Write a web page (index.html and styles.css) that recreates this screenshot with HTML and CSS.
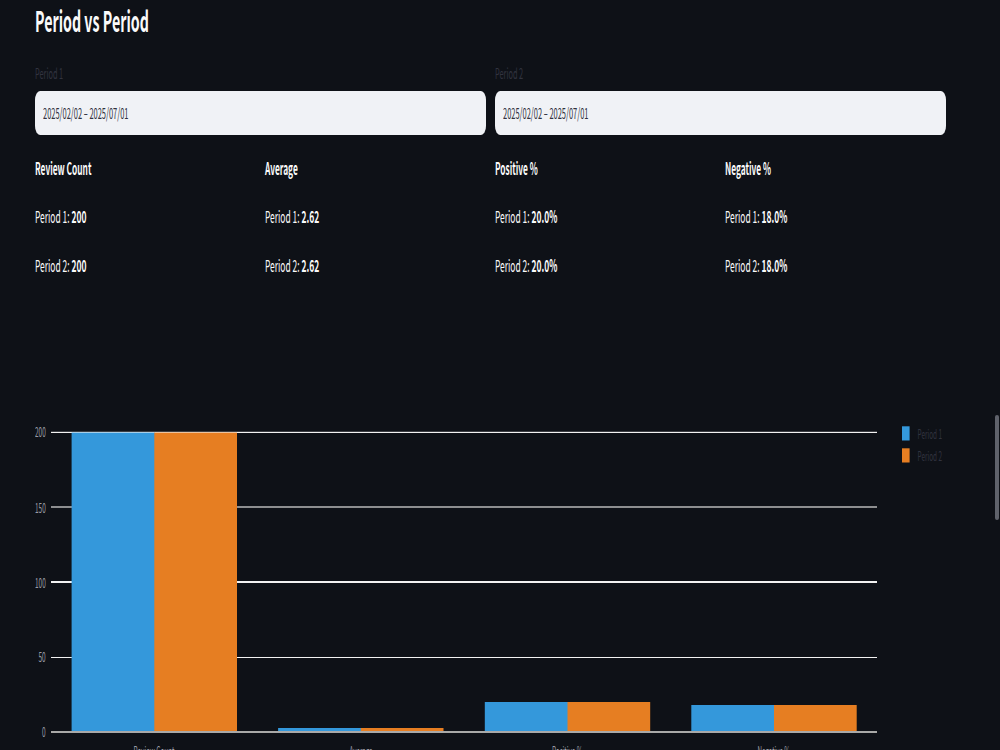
FILE: index.html
```html
<!DOCTYPE html>
<html lang="en">
<head>
    <meta charset="UTF-8">
    <meta name="viewport" content="width=device-width, initial-scale=1.0">
    <title>Period vs Period</title>
    <link rel="stylesheet" href="styles.css">
</head>
<body>
    <main class="container">
        <h3 class="title"><span class="narrow">Period vs Period</span></h3>

        <div class="inputs">
            <div class="field">
                <div class="label"><span class="narrow">Period 1</span></div>
                <div class="date-input"><span class="narrow">2025/02/02 – 2025/07/01</span></div>
            </div>
            <div class="field">
                <div class="label"><span class="narrow">Period 2</span></div>
                <div class="date-input"><span class="narrow">2025/02/02 – 2025/07/01</span></div>
            </div>
        </div>

        <div class="metrics">
            <div class="metric">
                <p><strong class="narrow">Review Count</strong></p>
                <p><span class="narrow">Period 1: <strong>200</strong></span></p>
                <p><span class="narrow">Period 2: <strong>200</strong></span></p>
            </div>
            <div class="metric">
                <p><strong class="narrow">Average</strong></p>
                <p><span class="narrow">Period 1: <strong>2.62</strong></span></p>
                <p><span class="narrow">Period 2: <strong>2.62</strong></span></p>
            </div>
            <div class="metric">
                <p><strong class="narrow">Positive %</strong></p>
                <p><span class="narrow">Period 1: <strong>20.0%</strong></span></p>
                <p><span class="narrow">Period 2: <strong>20.0%</strong></span></p>
            </div>
            <div class="metric">
                <p><strong class="narrow">Negative %</strong></p>
                <p><span class="narrow">Period 1: <strong>18.0%</strong></span></p>
                <p><span class="narrow">Period 2: <strong>18.0%</strong></span></p>
            </div>
        </div>

        <svg class="chart" width="930" height="340" viewBox="35 420 930 340">
            <!-- grid -->
            <rect class="grid" x="51" y="431.8" width="826" height="1.2"/>
            <rect class="grid grid-soft" x="51" y="506" width="826" height="2"/>
            <rect class="grid" x="51" y="581" width="826" height="2"/>
            <rect class="grid" x="51" y="657" width="826" height="1"/>

            <!-- bars -->
            <rect class="bar-1" x="71.6" y="432.6" width="83.4" height="299.6"/>
            <rect class="bar-2" x="154.3" y="432.6" width="82.7" height="299.6"/>
            <rect class="bar-1" x="278.1" y="728" width="83.4" height="4"/>
            <rect class="bar-2" x="360.8" y="728" width="82.7" height="4"/>
            <rect class="bar-1" x="484.8" y="702" width="83.2" height="30"/>
            <rect class="bar-2" x="567.5" y="702" width="82.7" height="30"/>
            <rect class="bar-1" x="691.3" y="705" width="82.7" height="27"/>
            <rect class="bar-2" x="774" y="705" width="82.7" height="27"/>
            <rect class="grid grid-zero" x="51" y="731" width="826" height="2"/>

            <!-- y axis -->
            <g class="tick">
                <text x="35" y="437.2" textLength="10.7" lengthAdjust="spacingAndGlyphs">200</text>
                <text x="35" y="512.7" textLength="10.7" lengthAdjust="spacingAndGlyphs">150</text>
                <text x="35" y="587.5" textLength="10.7" lengthAdjust="spacingAndGlyphs">100</text>
                <text x="38.4" y="662.3" textLength="7.2" lengthAdjust="spacingAndGlyphs">50</text>
                <text x="42" y="737" textLength="3.6" lengthAdjust="spacingAndGlyphs">0</text>
            </g>

            <!-- x axis -->
            <g class="tick">
                <text x="133.5" y="755.6" textLength="41" lengthAdjust="spacingAndGlyphs">Review Count</text>
                <text x="349.5" y="755.6" textLength="23" lengthAdjust="spacingAndGlyphs">Average</text>
                <text x="552" y="755.6" textLength="30.5" lengthAdjust="spacingAndGlyphs">Positive %</text>
                <text x="757.5" y="755.6" textLength="32.5" lengthAdjust="spacingAndGlyphs">Negative %</text>
            </g>

            <!-- legend -->
            <rect class="bar-1" x="902" y="426.3" width="7.6" height="14.2"/>
            <rect class="bar-2" x="902" y="448.3" width="7.6" height="14.2"/>
            <g class="legend">
                <text x="917.5" y="439.3" textLength="24.5" lengthAdjust="spacingAndGlyphs">Period 1</text>
                <text x="917.5" y="461.3" textLength="24.5" lengthAdjust="spacingAndGlyphs">Period 2</text>
            </g>
        </svg>
    </main>
    <div class="scrollbar"></div>
</body>
</html>
```
FILE: styles.css
```css
* {
    box-sizing: border-box;
}

body {
    margin: 0;
    height: 750px;
    overflow: hidden;
    background: #0e1117;
    color: #fafafa;
    font-family: "Noto Sans CJK JP", "Noto Sans", sans-serif;
    font-size: 16.5px;
}

.container {
    padding: 0 35px;
    width: 981px;
}

.narrow {
    display: inline-block;
    white-space: nowrap;
    transform: scaleX(0.505);
    transform-origin: 0 50%;
}

.title {
    margin: 0;
    height: 62px;
    font-size: 28.8px;
    font-weight: bold;
    line-height: 39px;
}

.title .narrow {
    transform: scaleX(0.495);
}

.inputs,
.metrics {
    display: grid;
    gap: 9.4px;
    width: 911px;
}

.inputs {
    grid-template-columns: 1fr 1fr;
}

.metrics {
    grid-template-columns: repeat(4, 1fr);
    margin-top: 20px;
}

.label {
    height: 29.4px;
    color: #31333f;
    font-size: 14.6px;
    line-height: 22px;
}

.date-input {
    height: 43.6px;
    padding-left: 8px;
    border-radius: 5px / 9px;
    background: #f0f2f6;
    color: #31333f;
    font-size: 14.8px;
    line-height: 43px;
}

.metric p {
    margin: 0 0 22.5px;
    height: 26px;
    line-height: 26px;
}

.metric span.narrow {
    transform: scaleX(0.511);
}

.chart {
    display: block;
    margin-top: 119.9px;
}

.grid {
    fill: #f2f2f2;
}

.grid-soft {
    fill: #8d8e90;
}

.grid-zero {
    fill: #a9a9a8;
}

.bar-1 {
    fill: #3498db;
}

.bar-2 {
    fill: #e67e22;
}

.tick {
    fill: #9a9ca5;
    font-size: 12.8px;
}

.legend {
    fill: #31333f;
    font-size: 12.8px;
}

.scrollbar {
    position: absolute;
    top: 415px;
    right: 1px;
    width: 4px;
    height: 105px;
    border-radius: 2px;
    background: #5f626b;
}
```
